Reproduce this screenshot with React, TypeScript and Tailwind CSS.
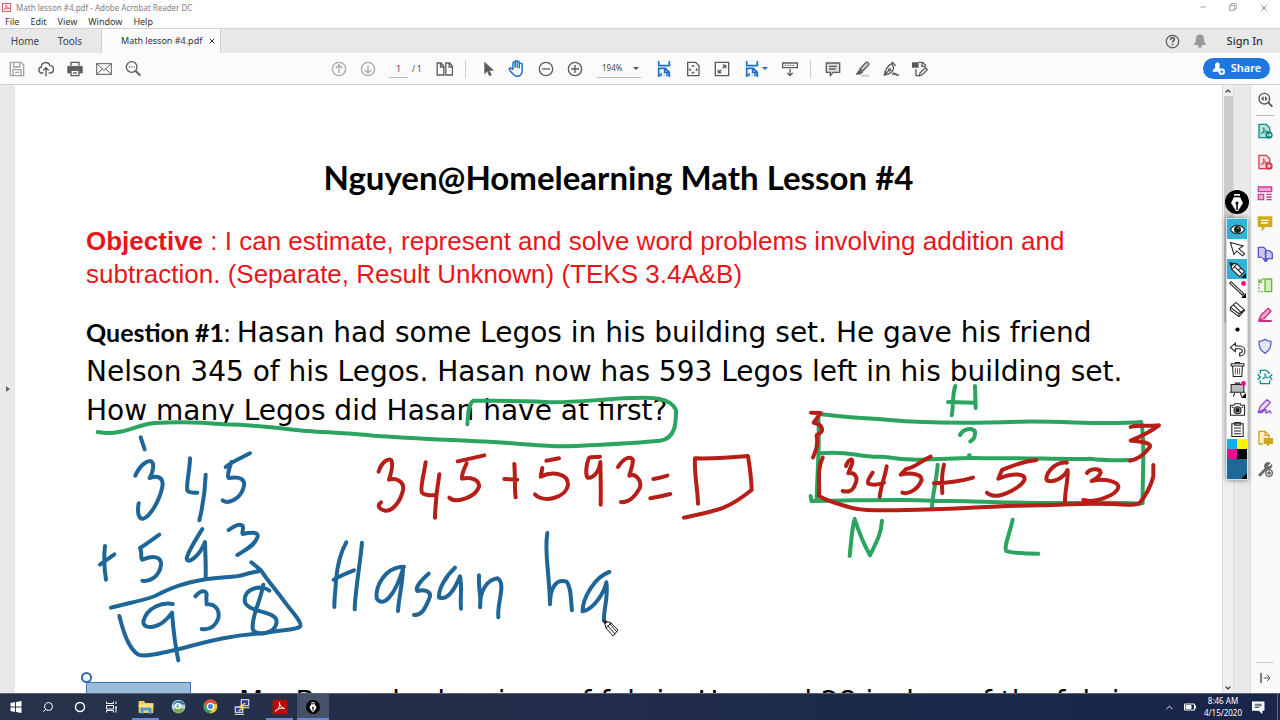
import { ReactNode } from 'react';
import { ChevronDown, ChevronUp, Minus, Search, X } from 'lucide-react';

type IconProps = { children: ReactNode; className?: string; box?: string };

// shared wrapper for the small line icons
function Icon({ children, className = 'size-4', box = '0 0 24 24' }: IconProps) {
  return (
    <svg viewBox={box} className={`${className} shrink-0`} fill="none" stroke="currentColor" strokeWidth="2" aria-hidden="true">
      {children}
    </svg>
  );
}

function ToolButton({ label, children, className = 'text-[#5c5c5c]' }: { label: string; children: ReactNode; className?: string }) {
  return (
    <button aria-label={label} className={`w-[29px] h-7 flex items-center justify-center ${className}`}>
      {children}
    </button>
  );
}

const fitWidth = (
  <>
    <path d="M4 0v7h16V0M4 24V11h10l6 6v7M13 11v6h7" strokeWidth="2.500" />
    <path d="M11 21h2M8 18v5l-3-2zM16 18v5l3-2z" strokeWidth="1" fill="currentColor" />
  </>
);

function TitleBar() {
  return (
    <header className="bg-white">
      <div className="h-[15px] flex items-center pl-[2px] text-[8px] text-[#808080]">
        <Icon className="size-[9px] text-[#c8323c]">
          <rect x="1" y="1" width="22" height="22" />
          <path d="M5 18c4-3 6-8 6-13 1 6 4 9 9 9-6 0-11 1-15 4Z" />
        </Icon>
        <h1 className="ml-[5px] whitespace-nowrap">Math lesson #4.pdf - Adobe Acrobat Reader DC</h1>
        <div className="ml-auto flex text-[#777]">
          <button aria-label="Minimize" className="w-[30px] flex justify-center"><Minus className="size-2" /></button>
          <button aria-label="Restore" className="w-[30px] flex justify-center">
            <Icon className="size-2"><path d="M2 7h15v15H2zM7 7V2h15v15h-5" /></Icon>
          </button>
          <button aria-label="Close" className="w-8 flex justify-center"><X className="size-[10px]" strokeWidth={2} /></button>
        </div>
      </div>
      <nav className="h-[13px] flex items-center gap-[11px] pl-[5px] text-[9px] leading-[13px] text-[#333]">
        {['File', 'Edit', 'View', 'Window', 'Help'].map(item => <button key={item}>{item}</button>)}
      </nav>
    </header>
  );
}

function TabBar() {
  return (
    <div className="h-[25px] shrink-0 flex items-stretch bg-[#e8e8e8] border-t border-[#d2d2d2] text-[10px] text-[#444]">
      <button className="w-[50px]">Home</button>
      <button className="w-[40px]">Tools</button>
      <div className="ml-[11px] w-[120px] flex items-center bg-[#fbfbfb] border-x border-[#d0d0d0] pl-[19px] text-[9px] text-[#333]">
        <button className="whitespace-nowrap">Math lesson #4.pdf</button>
        <button aria-label="Close tab" className="ml-auto mr-[4px]"><X className="size-2" strokeWidth={3} /></button>
      </div>
      <div className="ml-auto flex items-center pr-[17px]">
        <button aria-label="Help" className="mr-[13px] text-[#555]">
          <Icon className="size-[15px]">
            <circle cx="12" cy="12" r="10" />
            <path d="M9 9c0-4 6-4 6-.5 0 2-3 2-3 5M12 15.5v2.5" strokeWidth="2.5" />
          </Icon>
        </button>
        <button aria-label="Notifications" className="mr-[20px] text-[#999]">
          <Icon className="size-[14px]">
            <path d="M12 2c-4 0-6 3-6 7 0 5-1 7-3 9h18c-2-2-3-4-3-9 0-4-2-7-6-7ZM10 20h4v2h-4z" fill="currentColor" />
          </Icon>
        </button>
        <button className="text-[11px] font-medium text-[#333]">Sign In</button>
      </div>
    </div>
  );
}

function Toolbar() {
  return (
    <div className="h-8 shrink-0 flex items-center bg-[#fbfbfb] border-b border-[#cfcfcf]">
      <div className="flex-1 flex pl-[2px] pr-2">
        <ToolButton label="Save" className="text-[#a3a3a3]">
          <Icon><path d="M2 2h16l4 4v16H2zM7 2v7h9V2M6 22v-9h12v9M9 17h6" /></Icon>
        </ToolButton>
        <ToolButton label="Upload">
          <Icon><path d="M8 18H6c-6 0-6-8-1-9 0-8 11-9 13-2 7 0 7 11 0 11h-2M12 23V11M8 14l4-4 4 4" /></Icon>
        </ToolButton>
        <ToolButton label="Print">
          <Icon>
            <path d="M6 7V2h12v5" />
            <path d="M1 8h22v10h-4v-5H5v5H1z" fill="currentColor" strokeWidth="1" />
            <path d="M6 14h12v8H6z" fill="#fbfbfb" />
            <path d="M9 18h6" />
          </Icon>
        </ToolButton>
        <ToolButton label="Email">
          <Icon><path d="M1 4h22v16H1zM1 4l11 10L23 4M1 20l8-8M23 20l-8-8" strokeWidth="1.500" /></Icon>
        </ToolButton>
        <ToolButton label="Find text">
          <Icon><circle cx="10" cy="9" r="8" /><path d="m16 15 7 7" strokeWidth="3" /><path d="M6 9h1.500m2 0h1.500m2 0h1.500" /></Icon>
        </ToolButton>
      </div>

      <div className="flex items-center pr-[22px] text-[8px] text-[#444]">
        <ToolButton label="Previous page" className="text-[#ababab]">
          <Icon><circle cx="12" cy="12" r="10" /><path d="M12 18V6M7 11l5-5 5 5" /></Icon>
        </ToolButton>
        <ToolButton label="Next page" className="text-[#ababab]">
          <Icon><circle cx="12" cy="12" r="10" /><path d="M12 6v12M7 13l5 5 5-5" /></Icon>
        </ToolButton>
        <input aria-label="Page number" defaultValue="1" className="ml-[7px] w-[19px] h-[18px] text-center border-b border-[#bbb] bg-transparent" />
        <span className="ml-1 w-[14px] mr-1 whitespace-nowrap">/ 1</span>
        <ToolButton label="Page thumbnails">
          <Icon className="w-[17px] h-4"><path d="M1 3h6l4 5v13H1zM6 3v6h5M14 3h6l4 5v13H14zM19 3v6h5" /></Icon>
        </ToolButton>
        <span className="mx-[6px] w-[2px] h-[18px] border-l border-[#ccc]" />
        <ToolButton label="Select">
          <Icon><path d="M7 2v17l4-4 3 7 3-1-3-7h6z" fill="currentColor" strokeWidth="1" /></Icon>
        </ToolButton>
        <ToolButton label="Hand" className="text-[#1a6fc4]">
          <Icon className="size-[17px]">
            <path d="M7 13V5c0-3 3-3 3 0v6V3c0-3 3-3 3 0v8V4c0-3 3-3 3 0v8V6c0-2 4-2 4 0v8c0 6-3 9-7 9-4 0-6-3-11-9-1-3 2-4 5 0" />
          </Icon>
        </ToolButton>
        <ToolButton label="Zoom out">
          <Icon><circle cx="12" cy="12" r="10" /><path d="M6 12h12" /></Icon>
        </ToolButton>
        <ToolButton label="Zoom in">
          <Icon><circle cx="12" cy="12" r="10" /><path d="M6 12h12M12 6v12" /></Icon>
        </ToolButton>
        <div className="ml-2 mr-2 w-11 h-[18px] flex items-center border-b border-[#bbb]">
          <select aria-label="Zoom level" className="appearance-none w-9 pl-[5px] bg-transparent">
            <option>194%</option>
          </select>
          <span className="border-x-[3px] border-t-[3px] border-x-transparent border-t-[#555]" />
        </div>
        <ToolButton label="Fit width" className="text-[#1a6fc4]"><Icon>{fitWidth}</Icon></ToolButton>
        <ToolButton label="Fit page">
          <Icon>
            <path d="M4 2h12l5 5v15H4z" />
            <path d="m10 8 2-2 2 2zM10 17l2 2 2-2zM8 11l-2 2 2 2zM17 11l2 2-2 2z" fill="currentColor" strokeWidth="1" />
          </Icon>
        </ToolButton>
        <ToolButton label="Full screen">
          <Icon><path d="M2 2h20v20H2zM7 17l4-4M13 11l4-4" /><path d="M13 6h5v5zM6 13v5h5z" fill="currentColor" strokeWidth="1" /></Icon>
        </ToolButton>
        <button aria-label="Page display" className="w-[39px] h-7 flex items-center justify-center gap-[2px] text-[#1a6fc4]">
          <Icon>{fitWidth}</Icon>
          <span className="border-x-[3px] border-t-[3px] border-x-transparent border-t-[#1a6fc4]" />
        </button>
        <ToolButton label="Read mode">
          <Icon><path d="M1 3h22v7H1zM12 12v10M8 18l4 4 4-4" /><path d="M4 6.500h16" strokeDasharray="2 2" /></Icon>
        </ToolButton>
        <span className="mx-[6px] w-[2px] h-[18px] border-l border-[#ccc]" />
        <ToolButton label="Comment">
          <Icon><path d="M2 3h20v14H12l-4 5v-5H2z" fill="#ddd" /><path d="M6 8h12M6 12h10" /></Icon>
        </ToolButton>
        <ToolButton label="Highlight">
          <Icon>
            <path d="M11 22h12" stroke="#ccc" strokeWidth="3" />
            <path d="m9 12 9-10c2-1 5 1 4 4l-9 9z" fill="#ccc" />
            <path d="m8 13 5 4-4 3H3z" fill="currentColor" strokeWidth="1" />
          </Icon>
        </ToolButton>
        <ToolButton label="Sign">
          <Icon><path d="m13 1 6 6M13 4C7 7 4 11 2 21c9-1 13-4 14-11zM2 21l7-7" /><circle cx="10" cy="13" r="1.500" /><path d="M14 21c2-5 4-3 3 0 2-3 3-2 3 0h4" /></Icon>
        </ToolButton>
        <ToolButton label="Edit document">
          <Icon><path d="M10 2h6l4 4v2M6 12v10h6" /><path d="M1 3h8v6H1z" fill="currentColor" /><path d="m12 18 8-8 3 3-8 8-4 1zM15 3v5h5" /></Icon>
        </ToolButton>
      </div>

      <div className="flex-1 flex justify-end pr-[10px]">
        <button className="h-[21px] w-[67px] rounded-full bg-[#1f78e0] text-white text-[11px] font-semibold flex items-center justify-center gap-[6px]">
          <Icon className="size-[13px]">
            <path d="M10 1c-4 0-5 4-4 7 1 5-5 5-5 10h13c0-3 1-4 3-5-3-1-4-2-3-5 1-4 0-7-4-7Z" fill="currentColor" strokeWidth="0" />
            <circle cx="18" cy="18" r="6" fill="currentColor" strokeWidth="0" />
            <path d="M15 18h6M18 15v6" stroke="#1f78e0" />
          </Icon>
          Share
        </button>
      </div>
    </div>
  );
}

function Lesson() {
  return (
    <main className="flex-1 min-w-0 bg-white overflow-hidden text-black whitespace-nowrap">
      <h2 className="mt-[72px] text-center font-[Lato] font-bold text-[33px] leading-[40px]">Nguyen@Homelearning Math Lesson #4</h2>
      <div className="pl-[71px]">
        <p className="mt-7 font-['Liberation_Sans'] text-[26px] leading-[33px] text-[#e8161a]">
          <b>Objective</b> : I can estimate, represent and solve word problems involving addition and
          <br />
          subtraction. (Separate, Result Unknown) (TEKS 3.4A&amp;B)
        </p>
        <p className="mt-[22px] font-['DejaVu_Sans'] text-[28px] leading-[39px]">
          <b className="font-[Lato] text-[25px]">Question #1</b><span className="font-[Lato] text-[25px]">: </span>
          Hasan had some Legos in his building set. He gave his friend
          <br />
          Nelson 345 of his Legos. Hasan now has 593 Legos left in his building set.
          <br />
          How many Legos did Hasan have at first?
        </p>
        <div className="mt-[240px] flex items-start">
          {/* selected picture, only the top edge is in view */}
          <div className="relative mt-3 w-[105px] h-12 bg-[#9bbdd9] border-x border-t border-[#3d79b0]">
            <span className="absolute -left-[6px] -top-[11px] size-[11px] rounded-full bg-white border-2 border-[#2c69ad]" />
          </div>
          <p className="ml-12 mt-3 font-['DejaVu_Sans'] text-[28px] leading-[39px]">
            Ms. Brown had a piece of fabric. He used 28 inches of the fabric
          </p>
        </div>
      </div>
    </main>
  );
}

function ScrollBar() {
  return (
    <div className="w-3 shrink-0 flex flex-col items-center justify-between bg-[#f0f0f0] border-x border-[#ddd] text-[#444]">
      <button aria-label="Scroll up" className="h-[11px]"><ChevronUp className="size-2" strokeWidth={4} /></button>
      <div className="w-[9px] h-[227px] bg-[#cbcbcb]" />
      <button aria-label="Scroll down" className="mt-auto h-[11px]"><ChevronDown className="size-2" strokeWidth={4} /></button>
    </div>
  );
}

const sideTools = [
  { name: 'Export PDF', color: 'text-[#17897e]', art: <><path d="M3 2h11l5 5v15H3z" fill="#b8e0dc" /><path d="M6 16c4-2 5-6 4-9 1 4 3 6 6 6-4 0-7 1-10 3Z" strokeWidth="1.500" /><circle cx="18" cy="18" r="5.500" fill="currentColor" strokeWidth="0" /><path d="M15 18h6m-2-2 2 2-2 2" stroke="#fff" strokeWidth="1.500" /></> },
  { name: 'Create PDF', color: 'text-[#d23b4d]', art: <><path d="M3 2h11l5 5v15H3z" fill="#fbdadd" /><path d="M6 16c4-2 5-6 4-9 1 4 3 6 6 6-4 0-7 1-10 3Z" strokeWidth="1.500" /><circle cx="18" cy="18" r="5.500" fill="currentColor" strokeWidth="0" /><path d="M15 18h6m-3-3v6" stroke="#fff" strokeWidth="1.500" /></> },
  { name: 'Edit PDF', color: 'text-[#cf3a97]', art: <><path d="M2 3h20v7H2zM2 14h8v8H2z" fill="#f4a6d6" /><path d="M14 14h8M14 18h8M14 22h8" /></> },
  { name: 'Comment', color: 'text-[#d0aa1d]', art: <><path d="M2 3h20v14H12l-4 5v-5H2z" fill="currentColor" /><path d="M6 8h12M6 12h10" stroke="#fff" /></> },
  { name: 'Combine files', color: 'text-[#5a55cc]', art: <><path d="M8 17H2V2h8l3 3v7M14 7h5l4 4v8h-6" fill="#c9c6f5" /><path d="M13 8v12M9 18l4 5 4-5" strokeWidth="3" /></> },
  { name: 'Organize pages', color: 'text-[#6db33f]', art: <><path d="M12 3h10v19H12z" fill="#d3edbd" /><path d="M3 10v12h7" strokeDasharray="3 2" /><path d="M10 2 3 8M3 3v5h5" /></> },
  { name: 'Redact', color: 'text-[#cb2e80]', art: <><path d="m3 19 3-7L17 2l4 4-10 11-6 2Z" fill="#eda8cb" /><path d="M2 21h20" strokeWidth="3" /></> },
  { name: 'Protect', color: 'text-[#5a63c4]', art: <path d="M12 2c3 2 6 3 9 3 0 8-1 13-9 18C4 18 3 13 3 5c3 0 6-1 9-3Z" fill="#e3e5fb" /> },
  { name: 'Compress PDF', color: 'text-[#168a93]', art: <><path d="M5 7V2h9l5 5M5 17v5h14v-5M1 8l4 4-4 4M23 8l-4 4 4 4" /><path d="M8 15c4-2 5-5 4-8 0 4 2 5 5 6-4 0-6 0-9 2Z" strokeWidth="1.500" /></> },
  { name: 'Fill & Sign', color: 'text-[#8b4ac9]', art: <path d="m2 20 3-9L15 1l5 4-10 11-8 4c6 3 8-4 11-4 2 0-1 5 1 5 3 0 3-3 5-3 1 0 0 3 3 3" fill="#eadcf8" /> },
  { name: 'Send for comments', color: 'text-[#d0a51d]', art: <><path d="M9 21H3V2h9l6 6v4M12 2v6h6" fill="#fbf0c6" /><path d="M11 13h12v7h-4l-3 3v-3h-5z" fill="currentColor" /></> },
  { name: 'More tools', color: 'text-[#666]', art: <><path d="M2 21 12 11C9 5 14 0 20 3l-4 4 2 2 4-4c1 5-2 8-7 7L5 23z" fill="currentColor" strokeWidth="1" /><circle cx="18" cy="18" r="5" fill="#fafafa" /><path d="M15 18h6m-3-3v6" /></> },
];

function SidePanel() {
  return (
    <aside className="w-[30px] shrink-0 bg-[#fafafa] border-l border-[#dcdcdc] pr-px flex flex-col items-center">
      <button aria-label="Search tools" className="h-[30px] text-[#555]">
        <Icon><circle cx="11" cy="10" r="8" /><path d="m17 16 6 6" strokeWidth="3" /><path d="M10 6v8l-4-4zM12 6v8l4-4z" fill="currentColor" strokeWidth="0" /></Icon>
      </button>
      <div className="w-[18px] border-t border-[#bbb]" />
      <div className="h-[368px] flex flex-col">
        {sideTools.map(tool => (
          <button key={tool.name} aria-label={tool.name} className={`flex-1 flex items-center ${tool.color}`}>
            <Icon>{tool.art}</Icon>
          </button>
        ))}
      </div>
      <button aria-label="Open pane" className="mt-auto w-[18px] h-[31px] flex items-center justify-center border-t border-[#ccc] text-[#555]">
        <Icon className="size-3"><path d="M4 2v20" strokeWidth="3" /><path d="M9 12h13M16 6l6 6-6 6" /></Icon>
      </button>
    </aside>
  );
}

const penTip = (
  <>
    <circle cx="12" cy="12" r="12" fill="#000" strokeWidth="0" />
    <path d="M9 4h6v3l3 6-5 8h-2l-5-8 3-6z" fill="#fff" strokeWidth="0" />
    <path d="M12 20v-7M9 6.500h6" stroke="#000" strokeWidth="1.500" />
    <circle cx="12" cy="13" r="1.500" fill="#000" strokeWidth="0" />
  </>
);

const corner = <path d="M24 17v7h-7z" fill="#000" strokeWidth="0" />;
const pinkDot = <circle cx="20.500" cy="3.500" r="3.500" fill="#ec1187" strokeWidth="0" />;

const penTools = [
  { name: 'Toggle ink', bg: 'bg-[#2fb4d8]', art: <><path d="M2 12c5-8 15-8 20 0-5 8-15 8-20 0Z" fill="#fff" strokeWidth="1.500" /><circle cx="12" cy="12" r="4" fill="#222" /><circle cx="13" cy="10" r="1" fill="#fff" strokeWidth="0" /></> },
  { name: 'Cursor', bg: '', art: <path d="m2 2 5 17 4-5 8 7 3-3-8-7 6-4z" fill="#fff" strokeWidth="1.500" /> },
  { name: 'Pen', bg: 'bg-[#2fb4d8]', art: <><path d="m2 3 9 1 11 11-7 7L4 12z" fill="#fff" strokeWidth="1.500" /><path d="m11 4-7 8M8 8l10 10M13 13l4-3" strokeWidth="1.500" /><path d="m2 3 4 1-3 3z" fill="#222" />{corner}</> },
  { name: 'Line', bg: '', art: <><path d="m1 3 18 17 2-2L3 1z" fill="#fff" strokeWidth="1.500" />{pinkDot}{corner}</> },
  { name: 'Eraser', bg: '', art: <><path d="m2 9 8-7 12 11-8 9-12-9z" fill="#fff" strokeWidth="1.500" /><path d="m6 5 12 12M2 9l12 9 8-6M14 18v4" strokeWidth="1.500" /></> },
  { name: 'Size', bg: '', art: <circle cx="12" cy="12" r="3" fill="#000" strokeWidth="0" /> },
  { name: 'Undo', bg: '', art: <path d="M9 3 2 9l7 6v-4h6c5 0 5 6 0 6v4c10 0 10-14 0-14H9z" fill="#fff" strokeWidth="1.500" /> },
  { name: 'Clear', bg: '', art: <><path d="M5 7h14l-1 15H6zM3 4h18v3H3zM9 4V2h6v2" fill="#fff" strokeWidth="1.500" /><path d="M9 10v9M12 10v9M15 10v9" strokeWidth="1" /></> },
  { name: 'Whiteboard', bg: '', art: <><path d="M3 5h18v11H3zM1 16h22M8 17l-2 5M16 17l2 5M8 3h8" fill="#bbb" strokeWidth="1.500" />{pinkDot}{corner}</> },
  { name: 'Screenshot', bg: '', art: <><path d="M2 6h5l1-2h8l1 2h5v14H2z" fill="#fff" strokeWidth="1.500" /><circle cx="12" cy="13" r="5" fill="#999" strokeWidth="1.500" /><circle cx="12" cy="13" r="2" fill="#000" /><path d="M4 9h2M18 9h2" /></> },
  { name: 'Clipboard', bg: '', art: <><path d="M4 4h16v18H4zM8 2h8v4H8z" fill="#fff" strokeWidth="1.500" /><path d="M7 10h10M7 14h10M7 18h10" strokeWidth="1.500" /></> },
];

// floating pen palette that sits over the window
function PenPalette() {
  return (
    <div className="absolute right-[31px] top-[190px] flex flex-col items-center text-[#222]">
      <Icon className="size-6">{penTip}</Icon>
      <div className="mt-[4px] w-[22px] bg-white border border-[#c9e4ee] shadow-[0_0_5px_rgba(0,0,0,0.5)]">
        {penTools.map(tool => (
          <button key={tool.name} aria-label={tool.name} className={`w-5 h-5 flex items-center justify-center ${tool.bg}`}>
            <Icon className="size-[17px]">{tool.art}</Icon>
          </button>
        ))}
        <div className="grid grid-cols-2">
          <button aria-label="Cyan" className="h-[10px] bg-[#12aeea]" />
          <button aria-label="Yellow" className="h-[10px] bg-[#fdf003]" />
          <button aria-label="Magenta" className="h-[10px] bg-[#e9108a]" />
          <button aria-label="Black" className="h-[10px] bg-black" />
        </div>
        <button aria-label="Current colour" className="w-5 h-5 bg-[#1d6799] flex items-end justify-end">
          <Icon className="size-5">{corner}</Icon>
        </button>
      </div>
    </div>
  );
}

// freehand strokes, each group in its own third-of-a-pixel grid
function Ink() {
  return (
    <svg viewBox="0 0 1280 720" className="absolute left-0 top-0 w-[1280px] h-[720px] pointer-events-none" fill="none" strokeLinecap="round" strokeLinejoin="round" aria-hidden="true">
      <g transform="translate(80 390) scale(.33333)" stroke="#1f6698" strokeWidth="12">
        <path d="M182 142 194 178" />
        <path d="M166 257C180 226 200 210 214 214C225 222 218 248 209 264C235 255 252 264 247 290C240 330 210 380 190 386C173 388 172 360 176 340" />
        <path d="M330 205C330 240 318 280 322 302Q330 310 352 308M377 254C376 290 368 350 358 391" />
        <path d="M510 190C485 204 460 212 437 231M454 216C448 238 440 256 446 264C480 258 500 268 490 295C480 325 447 345 428 331" />
        <path d="M75 468C71 500 72 530 78 569M60 524 103 493" />
        <path d="M238 434C215 450 195 465 180 474C188 490 180 505 187 509C220 494 245 500 243 525C238 560 210 576 187 572" />
        <path d="M367 417C350 445 325 482 320 505C322 525 358 500 375 456C376 490 378 530 377 562" />
        <path d="M446 420C465 405 482 400 488 408C492 418 484 430 488 432C520 425 540 427 531 445C522 468 495 480 472 495" />
        <path d="M93 653C150 638 185 633 225 618C280 590 310 580 377 568C430 560 470 563 495 553C515 547 530 546 543 541L514 517L543 541C565 575 590 602 615 637C632 660 670 700 660 710C645 722 600 718 550 730C460 735 390 752 310 774C250 788 200 802 175 794C145 775 130 725 118 678" />
        <path d="M278 642C250 636 200 650 190 695C190 720 240 720 276 668C280 720 286 770 295 811" />
        <path d="M346 619C365 597 385 600 379 622L380 643C405 640 420 660 415 685C405 712 385 720 365 717" />
        <path d="M568 602C550 585 495 590 494 630C495 670 590 660 590 695C588 735 520 740 518 715C515 675 540 640 550 584" />
      </g>
      <g transform="translate(80 390) scale(.33333)" stroke="#2aa45f" strokeWidth="12">
        <path d="M53 126Q90 132 115 126C155 120 180 103 225 99C300 94 370 97 430 103C520 105 570 110 640 119C700 126 800 128 880 137C1000 145 1140 151 1240 156C1360 163 1410 173 1480 168C1580 163 1660 160 1740 152C1790 146 1788 90 1788 60C1770 15 1690 24 1650 24C1560 28 1500 36 1420 37C1360 32 1260 33 1180 32C1166 40 1164 70 1162 103" />
      </g>
      <g transform="translate(320 380) scale(.33333)" stroke="#b51f18" strokeWidth="12">
        <path d="M176 275C184 248 203 233 214 241C220 255 214 278 207 299C230 293 250 305 250 325C244 360 220 395 195 392C177 388 170 376 183 367" />
        <path d="M317 247C312 285 299 325 306 338Q314 347 344 346M358 283C351 325 346 370 345 413" />
        <path d="M413 244 493 226M440 250C430 270 425 285 426 296C450 291 478 296 477 320C468 350 410 373 388 353" />
        <path d="M583 252C586 290 583 325 587 352M553 297 592 299" />
        <path d="M679 242 717 235M667 264 662 290C695 274 745 278 744 315C737 355 670 370 645 343" />
        <path d="M840 230C824 232 807 228 805 238C798 258 796 285 803 293C820 296 838 275 841 246C842 285 843 325 842 374" />
        <path d="M894 261C910 235 930 226 939 240C938 265 928 280 928 287C945 278 965 300 960 323C948 345 930 370 903 366" />
        <path d="M1000 297Q1020 294 1042 287M991 355Q1020 350 1051 342" />
        <path d="M1134 371C1133 325 1122 280 1125 235Q1190 237 1284 228C1290 265 1294 290 1295 330C1225 386 1200 390 1092 413" />
      </g>
      <g transform="translate(320 380) scale(.33333)" stroke="#1f6698" strokeWidth="12">
        <path d="M79 487C63 515 53 545 48 600C47 630 43 650 43 681M126 488C120 555 106 630 104 688M41 599Q65 585 102 571" />
        <path d="M252 560C190 561 166 625 170 655C190 685 224 647 249 567C248 610 236 655 234 693" />
        <path d="M326 581C298 605 286 625 292 633C315 626 340 635 326 660C315 685 305 708 282 705" />
        <path d="M405 563C375 590 355 630 357 652C385 665 410 615 420 589C427 620 420 650 423 686" />
        <path d="M477 586C475 630 485 655 480 682C479 632 500 600 532 595C560 610 530 670 535 712" />
        <path d="M682 459C672 520 688 570 690 673C690 620 710 596 740 605C755 625 751 655 756 691" />
        <path d="M868 576C825 590 787 655 788 694C825 688 855 630 859 607C866 650 850 690 852 722" />
      </g>
      <g transform="translate(800 380) scale(.33333)" stroke="#2aa45f" strokeWidth="12">
        <path d="M466 18C456 45 461 80 455 106M525 18 527 84M444 66 525 68" />
        <path d="M65 103C150 115 190 112 270 120C400 132 570 128 660 125C800 122 900 136 1024 126C1036 190 1027 270 1028 370M55 112C60 195 52 270 50 355" />
        <path d="M62 220C150 210 180 235 250 230C370 250 450 230 550 235C670 232 800 240 870 236Q920 242 990 240" />
        <path d="M32 348 34 363C180 362 300 356 400 362C520 362 650 370 760 369C850 370 930 365 1020 371M413 254C410 300 398 340 396 382" />
        <path d="M480 165C490 145 518 142 525 155C526 170 520 180 511 184M507 226h2" />
        <path d="M149 528C154 480 156 440 164 417C176 455 190 490 210 526C230 485 244 460 246 422" />
        <path d="M638 419C630 460 610 500 619 513Q640 521 715 521" />
      </g>
      <g transform="translate(800 380) scale(.33333)" stroke="#b51f18" strokeWidth="12">
        <path d="M33 98 62 99 41 128C70 133 75 155 50 165C55 195 48 212 39 232" />
        <path d="M992 141C1010 134 1050 140 1077 136C1045 160 1020 170 992 182C1020 184 1060 188 1048 203C1030 226 1015 238 990 242" />
        <path d="M68 233C50 270 60 310 57 348C85 365 120 373 150 382C190 395 270 391 400 388C500 386 610 375 740 376C820 370 880 370 940 372C970 375 1005 375 1018 370C1040 345 1050 325 1060 290L1060 255" />
        <path d="M138 258C145 237 160 232 157 249L145 280C165 276 175 292 166 312C160 332 145 338 128 333" />
        <path d="M218 278C208 292 200 305 205 311Q225 318 252 308M260 259C255 290 242 320 239 351" />
        <path d="M392 230C360 244 345 263 318 267L302 284C330 277 365 280 365 300C355 328 325 344 307 338" />
        <path d="M432 254C425 280 425 310 427 339M402 310Q470 308 519 293" />
        <path d="M709 240C660 245 640 258 606 270L595 296C640 277 680 280 673 300C665 320 610 350 583 347C569 345 565 343 561 338" />
        <path d="M801 248C760 244 730 290 742 302C760 308 790 295 803 270C805 300 794 335 795 365" />
        <path d="M861 279C870 266 900 263 902 278C900 288 886 299 875 303C915 294 956 305 955 322C950 347 880 370 850 360" />
      </g>
      {/* pencil cursor */}
      <g transform="translate(603 620)" stroke="#222" fill="#fff" strokeWidth="1">
        <path d="m1 1 2 7 7 8 5-6-7-7zM3 8l5-5M5 6l7 8M7 4l7 8" />
        <path d="m1 1 1 3 2-2z" fill="#222" />
      </g>
    </svg>
  );
}

function TaskButton({ label, children, className = 'w-8' }: { label: string; children: ReactNode; className?: string }) {
  return (
    <button aria-label={label} className={`pt-[1px] flex items-center justify-center border-b-2 border-transparent ${className}`}>
      {children}
    </button>
  );
}

function Taskbar() {
  return (
    <footer className="h-[27px] shrink-0 flex bg-linear-to-r from-[#27324a] to-[#192549] text-white border-t border-[#59627a]">
      <TaskButton label="Start">
        <Icon className="size-3"><path d="m1 4 9-2v9H1zM12 2l11-2v11H12zM1 13h9v9l-9-2zM12 13h11v11l-11-2z" fill="currentColor" strokeWidth="0" /></Icon>
      </TaskButton>
      <TaskButton label="Search"><Search className="size-3 -scale-x-100" strokeWidth={2} /></TaskButton>
      <TaskButton label="Cortana"><Icon className="size-3"><circle cx="12" cy="12" r="9" strokeWidth="3" /></Icon></TaskButton>
      <TaskButton label="Task view">
        <Icon className="size-3"><path d="M1 1v4h14V1M1 9h14v7H1zM1 23v-4h14v4M20 1v5M20 10v13M18 13h4" /></Icon>
      </TaskButton>
      <TaskButton label="File Explorer" className="border-b-[#6c86dc] ml-1 mr-[3px] w-[27px]">
        <Icon className="size-4">
          <path d="M1 3h8l2 3h12v15H1z" fill="#f1ca5f" strokeWidth="0" />
          <path d="M1 8h22v4H1z" fill="#ffe08a" strokeWidth="0" />
          <path d="M4 22v-9h16v9h-4v-5H8v5z" fill="#3c9bd8" strokeWidth="0" />
        </Icon>
      </TaskButton>
      <TaskButton label="Globe">
        <Icon className="size-[15px]">
          <circle cx="12" cy="12" r="11" fill="#b7d0dc" strokeWidth="0" />
          <path d="M3 9C7 0 20 1 22 10c-5-3-11-1-19-1Z" fill="#297ca6" strokeWidth="0" />
          <path d="M4 18c5 7 15 5 18-3-7 3-9-6-14-3Z" fill="#74ab45" strokeWidth="0" />
          <circle cx="11" cy="11" r="4" stroke="#fff" />
        </Icon>
      </TaskButton>
      <TaskButton label="Chrome">
        <Icon className="size-[15px]">
          <circle cx="12" cy="12" r="11" fill="#f5c52c" strokeWidth="0" />
          <path d="M2 7a11 11 0 0 1 20.500 1H12l-5 6z" fill="#dd4a3e" strokeWidth="0" />
          <path d="M2 7a11 11 0 0 0 9 16l5-9-8 1z" fill="#36a357" strokeWidth="0" />
          <circle cx="12" cy="12" r="5" fill="#4382e8" stroke="#fff" />
        </Icon>
      </TaskButton>
      <TaskButton label="PuTTY">
        <Icon className="size-4">
          <path d="M11 1h11v9H11zM2 12h11v8H2z" fill="#2538b4" stroke="#ccc" />
          <path d="M1 23h14M10 13h13" stroke="#ccc" />
          <path d="m17 6-9 6 6 1-7 5" stroke="#f3e43a" />
        </Icon>
      </TaskButton>
      <TaskButton label="Acrobat Reader" className="border-b-[#6c86dc] ml-2 mr-1 w-[27px]">
        <Icon className="size-4">
          <rect x="1" y="1" width="22" height="22" fill="#b60c0c" strokeWidth="0" />
          <path d="M5 18c5-2 7-7 6-13 1 6 4 9 8 9-5-1-10 0-14 4Z" stroke="#fff" strokeWidth="1.500" />
        </Icon>
      </TaskButton>
      <TaskButton label="Pen" className="w-8 bg-[#46526a] border-b-[#6c86dc]"><Icon className="size-[14px]">{penTip}</Icon></TaskButton>

      <div className="ml-auto flex items-center text-[8px] leading-3">
        <ChevronUp className="size-[11px]" />
        <Icon className="ml-[9px] w-3 h-3">
          <path d="M1 6h20v12H1zM23 9v6" />
          <path d="M4 9h10v6H4z" fill="currentColor" />
        </Icon>
        <time className="ml-1 w-[46px] text-center whitespace-nowrap">8:46 AM<br />4/15/2020</time>
        <button aria-label="Notifications" className="ml-[6px]">
          <Icon className="size-[13px]"><path d="M1 2h21v15h-4v5l-5-5H1z" fill="currentColor" /><path d="M5 6h13M5 9h13M5 12h8" stroke="#192549" strokeWidth="1.500" /></Icon>
        </button>
        <span className="ml-3 mr-[2px] h-full border-l border-[#667]" />
      </div>
    </footer>
  );
}

export default function App() {
  return (
    <div className="relative h-screen flex flex-col overflow-hidden bg-white font-['Noto_Sans',sans-serif]">
      <TitleBar />
      <TabBar />
      <Toolbar />
      <div className="flex-1 min-h-0 flex bg-[#e9e9e9]">
        <button aria-label="Show navigation pane" className="w-[15px] shrink-0 flex items-center justify-center">
          <span className="border-y-[3px] border-l-[4px] border-y-transparent border-l-[#666]" />
        </button>
        <Lesson />
        <ScrollBar />
        <div className="w-4 shrink-0" />
        <SidePanel />
      </div>
      <Taskbar />
      <Ink />
      <PenPalette />
    </div>
  );
}
